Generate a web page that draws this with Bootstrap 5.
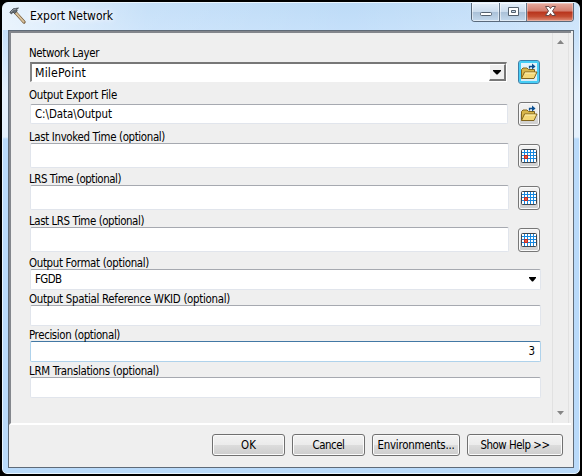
<!DOCTYPE html>
<html lang="en">
<head>
<meta charset="utf-8">
<title>Export Network</title>
<link href="https://cdn.jsdelivr.net/npm/bootstrap@5.3.0/dist/css/bootstrap.min.css" rel="stylesheet">
<style>
body{background:#000;width:582px;height:476px;overflow:hidden;font:11.4px/12px "DejaVu Sans Condensed","DejaVu Sans",sans-serif;font-stretch:condensed;color:#000}
svg{display:block;flex:none}
.win{margin:2px;width:578px;height:472px;border-radius:6px 6px 5px 5px;border:1px solid #e9f5ff;padding:0 5px 5px;
background:linear-gradient(90deg,rgba(255,255,255,.65),rgba(255,255,255,.15) 25%,rgba(255,255,255,0) 60%,rgba(255,255,255,.2)) 0 0/100% 27px no-repeat,linear-gradient(#bddbf7 0,#c5e0fa 27px,#e4f0fc 90px,#e4f0fc 134px,#b9dafa 136px,#b9dafa)}
.bar{height:27px}
.tool{margin:4px 0 0 1px}
.ttl{font-size:12px;line-height:26px;margin-left:4px;width:84px;text-shadow:0 0 5px #fff,0 0 8px #fff}
.caps{height:19px;border:1px solid #59697b;border-top:0;border-radius:0 0 4px 4px;overflow:hidden;width:103px}
.cap{width:28px;border-right:1px solid #66788b;background:linear-gradient(#e3eef9,#cbdced 48%,#a9c0d7 50%,#c4d9ed);box-shadow:inset 0 0 0 1px #ffffff80}
.cap.mx{width:27px}
.cap.x{flex:1;border:0;background:linear-gradient(#e7aca0,#d37d6d 45%,#b8341c 50%,#c44d32 75%,#e0917c);box-shadow:inset 0 0 0 1px #ffffff50}
.client{width:566px;height:438px;background:#efefef;border:1px solid #5f6b78}
.pane{height:394px;width:562px;border-top:2px solid #83868c;border-left:2px solid #83868c;border-bottom:2px solid #fff}
.formcol{width:529px;padding:12px 0 0 19px}
.r{height:42px}.r.s{height:36px}
.lab{height:14px;padding-top:2px;line-height:12px;white-space:nowrap;margin-left:-1px}
.fit{display:inline-block;white-space:nowrap}
.fld{height:21px;width:511px;background:#fff;border:1px solid #e1e5ec;border-top-color:#a6a9b0;border-radius:2px;padding:0 5px 0 4px;line-height:19px}
.fld.m{width:478px;height:20px;margin-top:3px}
.fld.t{width:479px;height:25px}
.fld.combo{font-size:12.2px;width:477px;border:1px solid #fff;border-top:2px solid #777;border-left:2px solid #858585;border-radius:0;padding:0;height:20px}
.tx{padding-left:3px}
.fld.foc{border-color:#afd2eb;border-top-color:#4278a4}
.drop{width:17px;height:17px;background:#efefef;border-right:2px solid #777;border-bottom:2px solid #777;border-top:1px solid #fff;border-left:1px solid #fff}
.ib{width:22px;height:24px;margin-top:1px;border:1px solid #777;border-radius:3px;box-shadow:inset 0 0 0 1px #fafafa;background:linear-gradient(#f3f3f3,#ebebeb 50%,#dadada 51%,#cfcfcf);padding:0}
.ib.hot{border-color:#3d7fa8;box-shadow:inset 0 0 0 2px #46cdf5;background:linear-gradient(#e8f5fc,#d4eaf5)}
.sb{width:17px;margin-right:2px;border-left:1px solid #e1e1e1;border-right:1px solid #e1e1e1;background:#eee;padding:7px 0 8px}
.foot{padding:9px 10px 0 0;gap:7px}
.pb{height:22px;width:73px;border:1px solid #707070;border-radius:3px;box-shadow:inset 0 0 0 1px #fbfbfb;background:linear-gradient(#f3f3f3,#ebebeb 49%,#dcdcdc 51%,#cdcdcd);padding:0;font-size:11.4px;line-height:20px;color:#000;text-align:center;white-space:nowrap}
.pb.env{width:88px}.pb.help{width:96px}
</style>
</head>
<body>
<svg width="0" height="0" class="position-absolute">
<symbol id="folder" viewBox="0 0 18 18">
<path d="M1.500 15.500V6.500L3 5h4l1.500 1.500H14.500V9" fill="#d8b64a" stroke="#82651d"/>
<path d="M1.500 15.500L4.500 9H17L14 15.500Z" fill="#f4d878" stroke="#82651d"/>
<path d="M5 10H15.500" stroke="#fff3b4"/>
<path d="M9.500 5.500V3.500H13" fill="none" stroke="#0b4f91" stroke-width="1.300"/><path d="M12 .5L15.500 3.500L12 6.500Z" fill="#0b4f91"/>
</symbol>
<symbol id="grid" viewBox="0 0 16 14">
<rect x="1" y="1" width="14" height="12" fill="#fff"/>
<path d="M3.500 1V13M6.500 1V13M9.500 1V13M12.500 1V13M1 3.500H15M1 6.500H15M1 9.500H15" stroke="#1687df" shape-rendering="crispEdges"/>
<rect x=".5" y=".5" width="15" height="13" rx="1" fill="none" stroke="#3e454d"/>
<rect x="3" y="6" width="4" height="4" fill="#c32b20"/><rect x="4" y="7" width="2" height="2" fill="#ec5c40"/>
</symbol>
</svg>
<main class="win">
<header class="bar d-flex align-items-start">
<svg class="tool" width="17" height="17" viewBox="0 0 17 17"><path d="M6 5L15 15" stroke="#6b4e2b" stroke-width="3.200" stroke-linecap="round"/><path d="M6.500 5.500L14.800 14.800" stroke="#d8c29d" stroke-width="1.900" stroke-linecap="round"/><path d="M.8 5.200L4.200 1.800L9.500 1L7.500 2.700L8.300 4L5.600 6.600L4.200 5.200L2.300 7Z" fill="#626970" stroke="#343a40" stroke-width=".7"/><path d="M2 5L4.500 2.700L7 2" stroke="#aeb8c0" fill="none" stroke-width=".7"/></svg>
<div class="ttl text-nowrap"><span class="fit" data-w="83">Export Network</span></div>
<div class="caps d-flex ms-auto">
<div class="cap"><svg width="27" height="18"><rect x="8.500" y="9.500" width="11" height="3" rx="1" fill="#fff" stroke="#53606e"/></svg></div>
<div class="cap mx"><svg width="26" height="18"><path d="M8.500 4.500H18.500V12.500H8.500ZM11.500 7.500V9.500H15.500V7.500Z" fill="#fff" fill-rule="evenodd" stroke="#53606e"/></svg></div>
<div class="cap x"><svg width="47" height="18"><path d="M18.500 3.500H22L23.500 5.500L25 3.500H28.500L25.500 8L28.500 12.500H25L23.500 10.500L22 12.500H18.500L21.500 8Z" fill="#fff" stroke="#684a4a"/></svg></div>
</div>
</header>
<section class="client">
<div class="pane d-flex">
<form class="formcol">
<div class="r"><div class="lab"><span class="fit" data-w="70">Network Layer</span></div>
<div class="d-flex"><div class="fld combo m d-flex"><span class="flex-grow-1 tx"><span class="fit" data-w="51">MilePoint</span></span><div class="drop"><svg width="14" height="14"><path d="M3 5H11V6L7.500 9.500H6.500L3 6Z"/></svg></div></div>
<button type="button" class="ib hot ms-auto" aria-label="Browse layer"><svg width="18" height="18" class="mx-auto"><use href="#folder"/></svg></button></div></div>
<div class="r"><div class="lab"><span class="fit" data-w="88">Output Export File</span></div>
<div class="d-flex"><div class="fld m"><span class="fit" data-w="77">C:\Data\Output</span></div>
<button type="button" class="ib ms-auto" aria-label="Browse file"><svg width="18" height="18" class="mx-auto"><use href="#folder"/></svg></button></div></div>
<div class="r"><div class="lab"><span class="fit" data-w="136">Last Invoked Time (optional)</span></div>
<div class="d-flex"><div class="fld t"></div><button type="button" class="ib ms-auto" aria-label="Pick date"><svg width="16" height="14" class="mx-auto"><use href="#grid"/></svg></button></div></div>
<div class="r"><div class="lab"><span class="fit" data-w="92">LRS Time (optional)</span></div>
<div class="d-flex"><div class="fld t"></div><button type="button" class="ib ms-auto" aria-label="Pick date"><svg width="16" height="14" class="mx-auto"><use href="#grid"/></svg></button></div></div>
<div class="r"><div class="lab"><span class="fit" data-w="115">Last LRS Time (optional)</span></div>
<div class="d-flex"><div class="fld t"></div><button type="button" class="ib ms-auto" aria-label="Pick date"><svg width="16" height="14" class="mx-auto"><use href="#grid"/></svg></button></div></div>
<div class="r s"><div class="lab"><span class="fit" data-w="120">Output Format (optional)</span></div>
<div class="fld d-flex align-items-center justify-content-between pe-1"><span class="fit" data-w="26.500">FGDB</span><svg width="7" height="5" viewBox="0 0 7 5"><path d="M0 0H7V1L4 4.500H3L0 1Z"/></svg></div></div>
<div class="r s"><div class="lab"><span class="fit" data-w="201">Output Spatial Reference WKID (optional)</span></div><div class="fld"></div></div>
<div class="r s"><div class="lab"><span class="fit" data-w="91">Precision (optional)</span></div><div class="fld foc text-end">3</div></div>
<div class="r s"><div class="lab"><span class="fit" data-w="130">LRM Translations (optional)</span></div><div class="fld"></div></div>
</form>
<div class="sb ms-auto d-flex flex-column align-items-center justify-content-between"><svg width="7" height="4"><path d="M0 4L3.500 0L7 4Z" fill="#858585"/></svg><svg width="7" height="4"><path d="M0 0H7L3.500 4Z" fill="#858585"/></svg></div>
</div>
<footer class="foot d-flex justify-content-end">
<button class="pb"><span class="fit" data-w="15">OK</span></button>
<button class="pb"><span class="fit" data-w="32">Cancel</span></button>
<button class="pb env"><span class="fit" data-w="77">Environments...</span></button>
<button class="pb help"><span class="fit" data-w="69">Show Help &gt;&gt;</span></button>
</footer>
</section>
</main>
<script src="https://cdn.jsdelivr.net/npm/bootstrap@5.3.0/dist/js/bootstrap.bundle.min.js"></script>
<script>
// Space each caption so that it fills its designed width
document.querySelectorAll('.fit').forEach(e=>{
  const n=e.textContent.length, w=e.getBoundingClientRect().width;
  e.style.letterSpacing=((+e.dataset.w-w)/n)+'px';
});
</script>
</body>
</html>
